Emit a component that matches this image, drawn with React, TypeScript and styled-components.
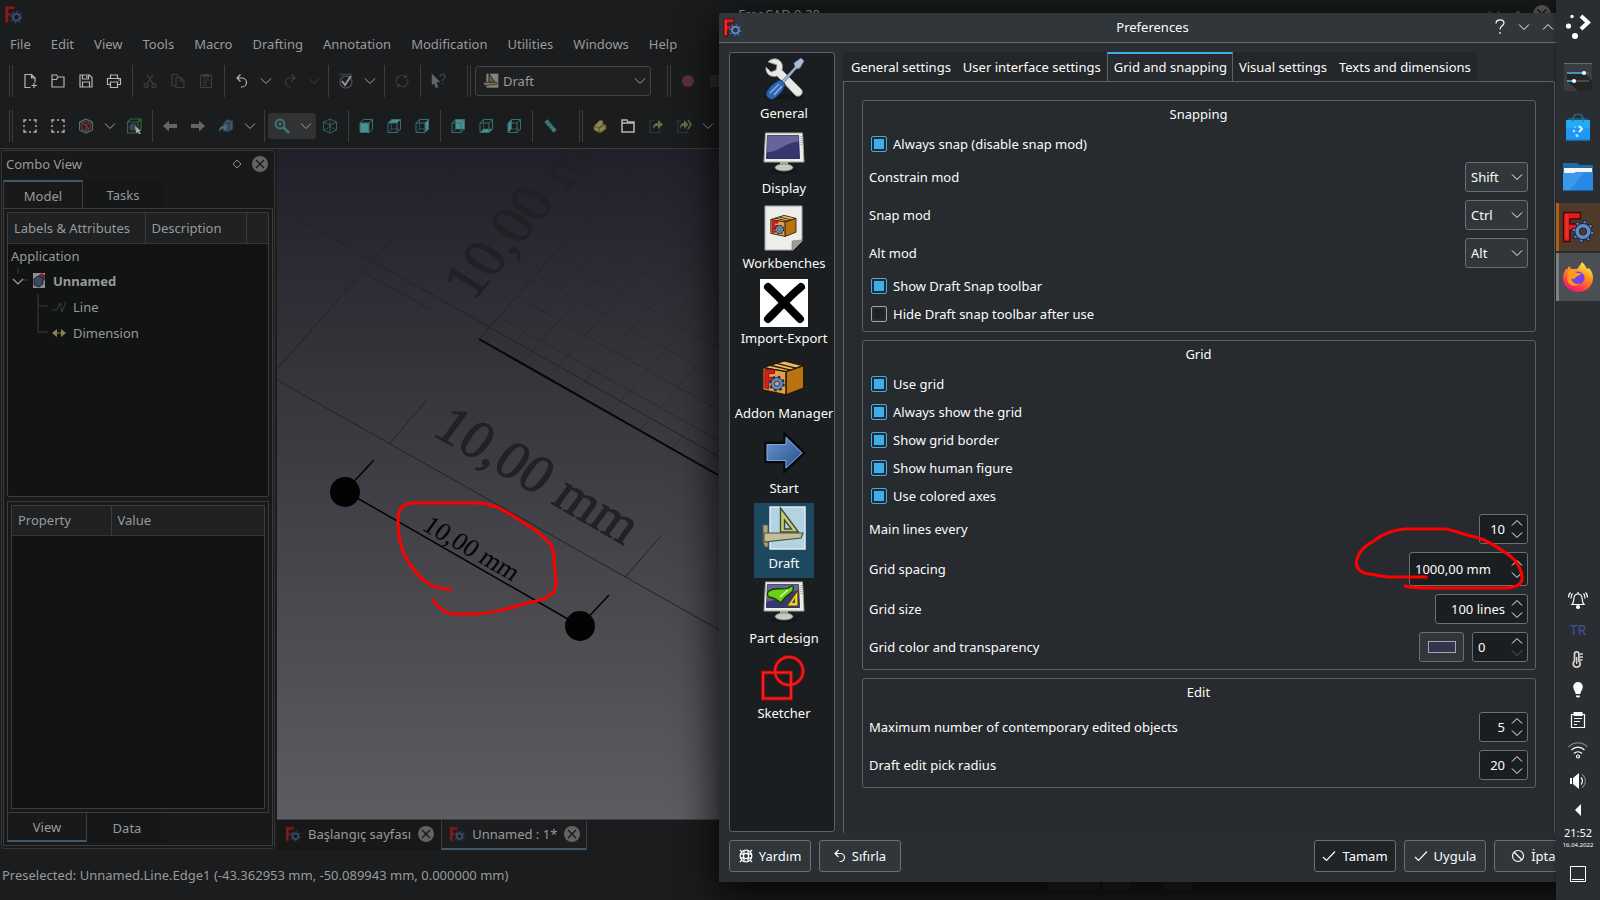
import React from "react";
import styled, { createGlobalStyle } from "styled-components";

const GlobalStyle = createGlobalStyle`
  *, *::before, *::after { box-sizing: border-box; }
  html, body { margin: 0; background: #1a1b1c; }
  body, button, input, select, table {
    font-family: "Noto Sans", "Liberation Sans", sans-serif;
    font-size: 13px;
    line-height: 18px;
  }
  button { margin: 0; padding: 0; border: 0; background: none; color: inherit; cursor: pointer; }
  svg { display: block; flex: none; }
`;

const Desktop = styled.div`
  display: flex;
  height: 100vh;
  overflow: hidden;
  background: #1a1b1c;
`;

const Workspace = styled.div`
  position: relative;
  flex: 1;
  min-width: 0;
  overflow: hidden;
`;

/* ---------- icons ---------- */

const Logo = ({ size = 20, dim = false }: { size?: number; dim?: boolean }) => (
  <svg width={size} height={size} viewBox="0 0 32 32" opacity={dim ? 0.45 : 1} aria-hidden="true">
    <path d="M1.500 1.500h17v6.500h-10.500v5h8v6h-8v11.500h-6.500z" fill="#e01b1b" stroke="#4a0606" strokeWidth="1.400" />
    <path d="M3.200 3.200h3v25h-3z" fill="#ff4a3c" opacity=".45" />
    <g transform="translate(21 20.500)">
      {[0, 45, 90, 135, 180, 225, 270, 315].map((a) => (
        <path key={a} d="M-2.300 -6.500L-1.200 -11h2.400L2.300 -6.500z" transform={`rotate(${a + 10})`} fill="#5f8cc8" stroke="#16263f" strokeWidth="1" />
      ))}
      <circle r="5.800" fill="none" stroke="#16263f" strokeWidth="5.200" />
      <circle r="5.800" fill="none" stroke="#5f8cc8" strokeWidth="3.600" />
    </g>
  </svg>
);

const Chevron = ({ up = false, color = "#fcfcfc", width = 12 }: { up?: boolean; color?: string; width?: number }) => (
  <svg width={width} height={Math.round(width / 2) + 2} viewBox="0 0 12 8" fill="none" stroke={color} strokeWidth="1" aria-hidden="true">
    <path d={up ? "M1 6.500L6 1.500L11 6.500" : "M1 1.500L6 6.500L11 1.500"} />
  </svg>
);

const CloseGlyph = ({ size = 16 }: { size?: number }) => (
  <svg width={size} height={size} viewBox="0 0 16 16" aria-hidden="true">
    <circle cx="8" cy="8" r="8" fill="#636363" />
    <path d="M4 4l8 8M12 4l-8 8" stroke="#151515" strokeWidth="1.200" />
  </svg>
);

const Line16 = ({ color = "#b4b5b6", children }: { color?: string; children: React.ReactNode }) => (
  <svg width="16" height="16" viewBox="0 0 16 16" fill="none" stroke={color} strokeWidth="1.200" aria-hidden="true">{children}</svg>
);

const faces: Record<string, string> = {
  front: "M2 5h9v9.500h-9z",
  top: "M2 5l3.500 -3.500h9l-3.500 3.500z",
  right: "M11 5l3.500 -3.500v9.500l-3.500 3.500z",
  rear: "M5.500 1.500h9v9.500h-9z",
  bottom: "M2 14.500l3.500 -3.500h9l-3.500 3.500z",
  left: "M2 5l3.500 -3.500v9.500l-3.500 3.500z",
};
const Cube = ({ face }: { face: string }) => (
  <svg width="16" height="16" viewBox="0 0 16 16" fill="none" stroke="#356f70" strokeWidth="1" aria-hidden="true">
    <path d={faces[face]} fill="#4c8f90" stroke="none" />
    <path d="M2 5h9v9.500h-9zM2 5l3.500 -3.500h9v9.500l-3.500 3.500M11 5l3.500 -3.500" />
    {face !== "front" && <path d="M5.500 1.500v9.500h9M5.500 11l-3.500 3.500" strokeDasharray="2 1" />}
  </svg>
);

const IsoCube = ({ children }: { children?: React.ReactNode }) => (
  <svg width="16" height="16" viewBox="0 0 16 16" fill="none" stroke="#2c6663" strokeWidth="1" aria-hidden="true">
    <path d="M8 1l6.500 3v8l-6.500 3l-6.500 -3v-8zM1.500 4l6.500 3l6.500 -3M8 7v8" />
    {children ?? <path d="M8 1v8M1.500 12l6.500 -3l6.500 3" strokeDasharray="2 1" />}
  </svg>
);

const ic = {
  newDoc: <Line16><path d="M8.500 14.500h-5.500v-13h6.500l3.500 3.500v4.500M9.500 1.500v3.500h3.500M12 10v5M9.500 12.500h5.500" /></Line16>,
  open: <Line16><path d="M2 14v-12h4.500l1.500 2h6v10zM2 6.500h4.500l1.500 -2.500" /></Line16>,
  save: <Line16><path d="M2 2h9.500l2.500 2.500v9.500h-12zM4.500 2v4h6v-4M4.500 14v-5h7v5M8.800 3v2" /></Line16>,
  print: <Line16><path d="M4.500 5.500v-3.500h7v3.500M4 11.500h-2.500v-6h13v6h-2.500M4.500 9h7v5.500h-7zM12 7h1.500" /></Line16>,
  cut: <Line16 color="#3d3e3f"><circle cx="4" cy="12.500" r="2" /><circle cx="12" cy="12.500" r="2" /><path d="M5 11l6 -9.500M11 11l-6 -9.500" /></Line16>,
  copy: <Line16 color="#3d3e3f"><path d="M5 12.500h-3v-11h5l2 2M6 4.500h5l3 3v7h-8zM10.500 4.500v3.500h3.500" /></Line16>,
  paste: <Line16 color="#3d3e3f"><path d="M2.500 2.500h11v12h-11zM5.500 1.500h5v2.500h-5zM5 7h6M5 9.500h4M5 12h3" /></Line16>,
  undo: <Line16><path d="M6.500 1.500l-3.500 3.500l3.500 3.500M3 5h5a4.500 4.500 0 0 1 0 9h-1" /></Line16>,
  redo: <Line16 color="#3d3e3f"><path d="M9.500 1.500l3.500 3.500l-3.500 3.500M13 5h-5a4.500 4.500 0 0 0 0 9h1" /></Line16>,
  check: <Line16 color="#4f5154"><circle cx="8" cy="9" r="6" /><path d="M1 1.500h13" stroke="#2c3a4b" strokeWidth="2" /><path d="M4 8l3 4l6 -9" stroke="#929394" strokeWidth="2" /></Line16>,
  refresh: <Line16 color="#3a3b3c"><path d="M2.500 10a5.700 5.700 0 0 1 8 -7l2 1.500M13.500 6a5.700 5.700 0 0 1 -8 7l-2 -1.500M12.500 1.500v3h-3M3.500 14.500v-3h3" /></Line16>,
  what: <Line16><path d="M2 1l8 8h-4l2 5l-2 1l-2 -5l-2 2z" fill="#666768" stroke="#555" strokeWidth=".6" /><path d="M10 4c0 -4 5 -3.500 5 -.5c0 2 -2.500 2 -2.500 4.500M12.500 10v1.500" stroke="#334050" strokeWidth="1.500" /></Line16>,
  select: <Line16><path d="M4.500 2h-2.500v2.500M7 2h2M11.500 2h2.500v2.500M14 7v2M14 11.500v2.500h-2.500M9 14h-2M4.500 14h-2.500v-2.500M2 9v-2" strokeWidth="1.400" /></Line16>,
  noDraw: <IsoCube><path d="M8 1l6.500 3v8l-6.500 3l-6.500 -3v-8z" stroke="#3a7c79" /><circle cx="8" cy="8" r="4.600" stroke="#742c31" strokeWidth="1.800" /><path d="M5 5l6 6" stroke="#742c31" strokeWidth="1.800" /></IsoCube>,
  boxSel: <Line16 color="#2f6a35"><path d="M1.500 4h10.500v11h-10.500zM1.500 4l3 -3h10.500v10l-3 4M12 4l3 -3" /><circle cx="7" cy="9" r="4" fill="#39465a" stroke="#242f40" /><path d="M9 8l6 5l-2 0l2 3l-2 0l-1 -2l-2 1z" fill="#aaa" stroke="none" /></Line16>,
  back: <svg width="16" height="16" viewBox="0 0 16 16" aria-hidden="true"><path d="M1 8l6 -5.500v3.500h8v4h-8v3.500z" fill="#646566" /></svg>,
  fwd: <svg width="16" height="16" viewBox="0 0 16 16" aria-hidden="true"><path d="M15 8l-6 -5.500v3.500h-8v4h8v3.500z" fill="#646566" /></svg>,
  link: <Line16 color="#222d3d"><path d="M5 5l4 -3.500l6 1v8.500l-4 3l-6 -1z" fill="#465468" strokeWidth=".8" /><path d="M11 5l4 -2.500M11 5v9M5 5h6" strokeWidth=".8" /><path d="M1 14c0 -5 2 -6 5 -6v-2.500l3 4l-3 3.500v-2.500c-2 0 -4 1 -5 3.500z" fill="#3a7479" stroke="none" /></Line16>,
  zoom: <Line16 color="#3f787b"><circle cx="6" cy="6" r="4.500" strokeWidth="1.800" /><path d="M9.500 9.500l5.500 5.500" strokeWidth="2.600" /><path d="M4 6h4M6 4v4" /></Line16>,
  iso: <IsoCube />,
  ruler: <Line16><path d="M2.500 4l3 -2.500l9 10.500l-3 2.500z" fill="#417f80" stroke="#285556" strokeWidth=".8" /><path d="M5 6l2 -1.500M7 8.500l2 -1.500M9 11l2 -1.500" stroke="#24494a" strokeWidth=".8" /></Line16>,
  part: <Line16><path d="M2 8l6 -6l3 1v3l3 1v4l-6 4l-6 -3z" fill="#8d8650" stroke="#4b4729" strokeWidth=".8" /><path d="M2 8l5 2l4 -4M7 10l1 5M7 10l7 -3" stroke="#4b4729" strokeWidth=".8" /></Line16>,
  folder: <Line16><path d="M2 14v-12h5l1 2h6v10zM2 5h12" strokeWidth="1.500" /></Line16>,
  exp: <Line16 color="#27394d"><path d="M6 2.500h-4v12h10v-4" /><path d="M5 11c0 -5 2 -6 5 -6v-3l5 4.500l-5 4.500v-3c-2 0 -3.500 .5 -5 3z" fill="#5c7340" stroke="none" /></Line16>,
  exp2: <Line16 color="#27394d"><path d="M5 2.500h-3v12h9v-4" /><path d="M4 11c0 -5 2 -6 4 -6v-3l4.500 4.500l-4.500 4.500v-3c-2 0 -3 .5 -4 3z" fill="#5c7340" stroke="none" /><path d="M12 2l3 4.500l-3 4.500" stroke="#5c7340" strokeWidth="1.500" /></Line16>,
};

/* ---------- main window ---------- */

const MainWindow = styled.main`
  display: flex;
  flex-direction: column;
  height: 100%;
  background: #1b1c1d;
  color: #989a9b;
`;

const TitleBar = styled.header`
  display: grid;
  grid-template-columns: 100px 1fr 100px;
  align-items: center;
  height: 28px;
  padding: 0 2px 0 4px;
  text-align: center;
`;

const WindowButtons = styled.div`
  display: flex;
  justify-content: flex-end;
  align-items: center;
  button { display: flex; justify-content: center; width: 24px; }
`;

const MenuBar = styled.nav`
  display: flex;
  align-items: center;
  height: 32px;
  button { padding: 0 10px; }
`;

const ToolBar = styled.div<{ $tall?: boolean }>`
  display: flex;
  align-items: center;
  height: ${(p) => (p.$tall ? 46 : 42)}px;
  padding-top: ${(p) => (p.$tall ? 2 : 0)}px;
`;

const Handle = styled.span<{ $first?: boolean }>`
  width: 4px;
  height: 32px;
  margin: 0 3px 0 ${(p) => (p.$first ? 9 : 15)}px;
  border: solid #3b3c3d;
  border-width: 0 1px;
`;

const Separator = styled.span`
  width: 1px;
  height: 32px;
  margin: 0 3px 0 4px;
  background: #3b3c3d;
`;

const ToolButton = styled.button<{ $narrow?: boolean }>`
  display: flex;
  align-items: center;
  justify-content: center;
  width: ${(p) => (p.$narrow ? 20 : 28)}px;
  height: 26px;
`;

const ActiveTool = styled.span`
  display: flex;
  border-radius: 3px;
  background: #303233;
`;

const WorkbenchSelect = styled.label`
  display: flex;
  align-items: center;
  gap: 4px;
  width: 176px;
  height: 30px;
  margin: 0 1px;
  padding: 0 4px 0 7px;
  border: 1px solid #434445;
  border-radius: 3px;
  background: #1f2021;
  select { flex: 1; border: 0; appearance: none; background: none; color: inherit; }
`;

const Body = styled.div`
  display: flex;
  flex: 1;
  min-height: 0;
  border-top: 1px solid #3b3c3d;
`;

const DockPanel = styled.section`
  display: flex;
  flex-direction: column;
  width: 274px;
  margin: 1px 2px 1px 1px;
  padding: 0 1px 2px;
  border: 1px solid #343536;
  border-radius: 3px;
  background: #191919;
`;

const DockTitle = styled.header`
  display: flex;
  align-items: center;
  height: 29px;
  padding: 0 5px 3px 3px;
  gap: 10px;
  h2 { flex: 1; margin: 0; font-size: 13px; font-weight: 400; }
`;

const DockTabs = styled.div<{ $foot?: boolean }>`
  display: flex;
  height: 29px;
  margin-bottom: ${(p) => (p.$foot ? 3 : -1)}px;
  margin-top: ${(p) => (p.$foot ? -4 : 0)}px;
`;

const DockTab = styled.button<{ $active?: boolean; $foot?: boolean }>`
  width: 80px;
  background: ${(p) => (p.$active ? "#191919" : "#151718")};
  border: 1px solid ${(p) => (p.$active ? "#3b3c3d" : "transparent")};
  ${(p) =>
    p.$active &&
    (p.$foot
      ? "border-top: 0; border-bottom: 2px solid #3d5866;"
      : "border-bottom: 0; border-top: 2px solid #3d5866;")}
`;

const DockBody = styled.div`
  display: flex;
  flex: 1;
  flex-direction: column;
  gap: 4px;
  min-height: 0;
  padding: 3px 3px 0;
  border: 1px solid #3b3c3d;
`;

const TreeBox = styled.div`
  flex: 286 1 0;
  border: 1px solid #3b3c3d;
  border-radius: 2px;
  background: #111413;
`;

const PropertyFrame = styled.div`
  flex: 308 1 0;
  display: flex;
  padding: 3px;
  border: 1px solid #3b3c3d;
`;

const PropertyBox = styled.div`
  flex: 1;
  border: 1px solid #3b3c3d;
  background: #111413;
`;

const DataTable = styled.table`
  width: 100%;
  border-collapse: collapse;
  table-layout: fixed;
  th {
    height: 30px;
    padding: 0 6px;
    border-right: 1px solid #3b3c3d;
    border-bottom: 1px solid #343536;
    background: #1f2122;
    font-weight: 400;
    text-align: left;
  }
  th:last-child { border-right: 0; }
  td { height: 25px; padding: 0 3px; }
`;

const TreeCell = styled.div<{ $bold?: boolean }>`
  display: flex;
  align-items: center;
  height: 26px;
  gap: 7px;
  font-weight: ${(p) => (p.$bold ? 700 : 400)};
`;

const Center = styled.div`
  display: flex;
  flex: 1;
  flex-direction: column;
  min-width: 0;
`;

const Viewport = styled.div`
  flex: 1;
  min-height: 0;
  overflow: hidden;
  background: linear-gradient(#20202a, #323138 28%, #5d5c60);
  border-bottom: 1px solid #3f3f41;
`;

const DocTabs = styled.div`
  display: flex;
  height: 30px;
`;

const DocTab = styled.div<{ $active?: boolean }>`
  display: flex;
  align-items: center;
  gap: 7px;
  padding: 0 6px 0 7px;
  background: ${(p) => (p.$active ? "#1c1d1f" : "#181819")};
  border: solid ${(p) => (p.$active ? "#3b3c3d" : "transparent")};
  border-width: 0 1px 2px;
  border-bottom-color: ${(p) => (p.$active ? "#3d5866" : "transparent")};
`;

const StatusBar = styled.footer`
  display: flex;
  align-items: center;
  height: 50px;
  padding: 0 363px 0 2px;
  gap: 3px;
  span { flex: 1; }
`;

const StatusItem = styled.i<{ $w: number; $gap?: number }>`
  width: ${(p) => p.$w}px;
  height: 28px;
  margin-right: ${(p) => p.$gap ?? 0}px;
  border-radius: 3px;
  background: #27282a;
`;

const gridB = [505, 522, 548, 575, 610, 640, 672, 704];
const gridA: [number, number][] = [[500, 318], [517, 297], [535, 275], [553, 255], [572, 233], [588, 215], [603, 198], [618, 183]];

const Scene = () => (
  <svg width="443" height="670" viewBox="277 149 443 670" overflow="visible" fill="none" role="img" aria-label="3D view with dimension">
    <g stroke="#25252c" strokeWidth="1">
      {gridA.map(([x, y], i) => <path key={i} opacity={0.75 - i * 0.08} d={`M${x} ${y}L760 ${y + (760 - x) * 0.56}`} />)}
      {gridB.map((x, i) => {
        const y = 353 + (x - 505) * 0.57;
        return <path key={x} opacity={0.7 - i * 0.05} d={`M${x} ${y}l180 -203`} />;
      })}
    </g>
    <g stroke="#222327" strokeWidth="1">
      <path d="M277 207L760 480M363 272L430 309M277 369L462 160M480 338L633 165" />
      <path d="M277 380L760 653M390 443L426 401M625 577L662 535" />
    </g>
    <path d="M479 339L718 475" stroke="#060606" strokeWidth="2" />
    <path d="M345 491L580 626M345 491L374 460M580 626L609 595" stroke="#030303" strokeWidth="1.500" />
    <circle cx="345" cy="492" r="15" fill="#030303" />
    <circle cx="580" cy="626" r="15" fill="#030303" />
    <g fontFamily="'Liberation Serif', serif">
      <text transform="translate(473 302) rotate(-50) skewX(8)" fontSize="58" fill="#202025" stroke="#202025">10,00 mm</text>
      <text transform="translate(431 434) rotate(30) skewX(-6)" fontSize="55" fill="#222126" stroke="#222126">10,00 mm</text>
      <text transform="translate(421 529) rotate(30) skewX(-6)" fontSize="26" fill="#030303">10,00 mm</text>
    </g>
    <path
      d="M451 589C430 590 420 578 411 566C401 552 398 538 398 522C398 508 402 503 416 503L476 503C490 503 500 508 510 514L535 530L549 542C553 547 554 553 554 560L556 582C556 592 552 595 545 598C538 602 528 602 520 605C505 610 490 613 476 614L456 614C444 614 438 607 433 600"
      stroke="#fe0000" strokeWidth="3" strokeLinecap="round"
    />
  </svg>
);

const menus = ["File", "Edit", "View", "Tools", "Macro", "Drafting", "Annotation", "Modification", "Utilities", "Windows", "Help"];

const Tool = ({ icon, label }: { icon: React.ReactNode; label: string }) => <ToolButton aria-label={label}>{icon}</ToolButton>;
const Drop = ({ off = false }: { off?: boolean }) => (
  <ToolButton $narrow aria-label="More"><Chevron color={off ? "#3d3e3f" : "#a0a1a2"} /></ToolButton>
);

const DraftGlyph = () => (
  <svg width="16" height="16" viewBox="0 0 48 48" opacity=".65" aria-hidden="true">
    <path d="M10 2h36v42h-36z" fill="#b9b9b4" />
    <path d="M18 2v26h18z" fill="#8f8a4a" stroke="#222" strokeWidth="3" />
    <path d="M2 28h40v6l-40 4z" fill="#b59a6a" stroke="#222" strokeWidth="2" />
  </svg>
);

const FreeCadWindow = () => (
  <MainWindow>
    <TitleBar>
      <Logo size={19} dim />
      <span>FreeCAD 0.20</span>
      <WindowButtons>
        <button aria-label="Minimize"><Chevron color="#989a9b" /></button>
        <button aria-label="Maximize"><Chevron up color="#989a9b" /></button>
        <button aria-label="Close"><CloseGlyph size={18} /></button>
      </WindowButtons>
    </TitleBar>
    <MenuBar>{menus.map((m) => <button key={m}>{m}</button>)}</MenuBar>
    <ToolBar>
      <Handle $first />
      <Tool icon={ic.newDoc} label="New" /><Tool icon={ic.open} label="Open" /><Tool icon={ic.save} label="Save" /><Tool icon={ic.print} label="Print" />
      <Separator />
      <Tool icon={ic.cut} label="Cut" /><Tool icon={ic.copy} label="Copy" /><Tool icon={ic.paste} label="Paste" />
      <Separator />
      <Tool icon={ic.undo} label="Undo" /><Drop /><Tool icon={ic.redo} label="Redo" /><Drop off />
      <Separator />
      <Tool icon={ic.check} label="Check" /><Drop />
      <Separator />
      <Tool icon={ic.refresh} label="Refresh" />
      <Separator />
      <Tool icon={ic.what} label="Help" />
      <Handle />
      <WorkbenchSelect>
        <DraftGlyph />
        <select aria-label="Workbench"><option>Draft</option></select>
        <Chevron color="#a0a1a2" />
      </WorkbenchSelect>
      <Handle />
      <Tool label="Record" icon={<svg width="12" height="12" aria-hidden="true"><circle cx="6" cy="6" r="6" fill="#5e3136" /></svg>} />
      <Tool label="Stop" icon={<svg width="12" height="12" aria-hidden="true"><path d="M0 0h12v12h-12z" fill="#2e2e2e" /></svg>} />
    </ToolBar>
    <ToolBar $tall>
      <Handle $first />
      <Tool icon={ic.select} label="Fit all" /><Tool icon={ic.select} label="Fit selection" /><Tool icon={ic.noDraw} label="Draw style" /><Drop /><Tool icon={ic.boxSel} label="Box selection" />
      <Separator />
      <Tool icon={ic.back} label="Back" /><Tool icon={ic.fwd} label="Forward" /><Tool icon={ic.link} label="Go to link" /><Drop />
      <Separator />
      <ActiveTool><Tool icon={ic.zoom} label="Zoom" /><Drop /></ActiveTool>
      <Tool icon={ic.iso} label="Isometric" />
      <Separator />
      <Tool icon={<Cube face="front" />} label="Front" /><Tool icon={<Cube face="top" />} label="Top" /><Tool icon={<Cube face="right" />} label="Right" />
      <Separator />
      <Tool icon={<Cube face="rear" />} label="Rear" /><Tool icon={<Cube face="bottom" />} label="Bottom" /><Tool icon={<Cube face="left" />} label="Left" />
      <Separator />
      <Tool icon={ic.ruler} label="Measure" />
      <Handle />
      <Tool icon={ic.part} label="Part" /><Tool icon={ic.folder} label="Group" /><Tool icon={ic.exp} label="Link" /><Tool icon={ic.exp2} label="Link group" /><Drop />
    </ToolBar>
    <Body>
      <DockPanel>
        <DockTitle>
          <h2>Combo View</h2>
          <svg width="10" height="10" viewBox="0 0 10 10" aria-hidden="true"><path d="M5 1l4 4l-4 4l-4 -4z" fill="none" stroke="#8a8b8c" /></svg>
          <button aria-label="Close panel"><CloseGlyph /></button>
        </DockTitle>
        <DockTabs>
          <DockTab $active>Model</DockTab>
          <DockTab>Tasks</DockTab>
        </DockTabs>
        <DockBody>
          <TreeBox>
            <DataTable>
              <colgroup><col style={{ width: 137 }} /><col style={{ width: 101 }} /><col /></colgroup>
              <thead><tr><th>Labels &amp; Attributes</th><th>Description</th><th /></tr></thead>
              <tbody>
                <tr><td colSpan={3}>Application</td></tr>
                <tr><td colSpan={3}>
                  <TreeCell $bold>
                    <svg width="35" height="26" viewBox="0 0 35 26" fill="none" aria-hidden="true">
                      <path d="M7 0v6M12 12h5" stroke="#3b3c3d" />
                      <path d="M2 11l5 5l5 -5" stroke="#a0a1a2" strokeWidth="1.200" />
                      <path d="M22 5h12v15h-12z" fill="#8f8f90" />
                      <path d="M28 7l3 -2l3 2v5l-3 1l-3 -2z" fill="#742a2c" />
                      <path d="M23 11l4 -3l5 2v6l-4 3l-5 -2z" fill="#394a60" stroke="#1c2431" />
                    </svg>
                    Unnamed
                  </TreeCell>
                </td></tr>
                <tr><td colSpan={3}>
                  <TreeCell>
                    <svg width="55" height="26" viewBox="0 0 55 26" fill="none" aria-hidden="true">
                      <path d="M27 0v26M27 12h10" stroke="#3b3c3d" />
                      <path d="M41 16h5l3 -7l2 9l4 -11" stroke="#353d49" />
                    </svg>
                    Line
                  </TreeCell>
                </td></tr>
                <tr><td colSpan={3}>
                  <TreeCell>
                    <svg width="55" height="26" viewBox="0 0 55 26" fill="none" aria-hidden="true">
                      <path d="M27 0v12h10" stroke="#3b3c3d" />
                      <path d="M41 13l5 -4v8zM55 13l-5 -4v8z" fill="#8a8350" /><path d="M46 13h4" stroke="#8a8350" />
                    </svg>
                    Dimension
                  </TreeCell>
                </td></tr>
              </tbody>
            </DataTable>
          </TreeBox>
          <PropertyFrame>
            <PropertyBox>
              <DataTable>
                <colgroup><col style={{ width: 99 }} /><col /></colgroup>
                <thead><tr><th>Property</th><th>Value</th></tr></thead>
              </DataTable>
            </PropertyBox>
          </PropertyFrame>
          <DockTabs $foot>
            <DockTab $active $foot>View</DockTab>
            <DockTab $foot>Data</DockTab>
          </DockTabs>
        </DockBody>
      </DockPanel>
      <Center>
        <Viewport><Scene /></Viewport>
        <DocTabs>
          <DocTab><Logo size={16} dim />Başlangıç sayfası<button aria-label="Close tab"><CloseGlyph /></button></DocTab>
          <DocTab $active><Logo size={16} dim />Unnamed : 1*<button aria-label="Close tab"><CloseGlyph /></button></DocTab>
        </DocTabs>
      </Center>
    </Body>
    <StatusBar>
      <span>Preselected: Unnamed.Line.Edge1 (-43.362953 mm, -50.089943 mm, 0.000000 mm)</span>
      <StatusItem $w={53} /><StatusItem $w={28} $gap={30} /><StatusItem $w={29} />
    </StatusBar>
  </MainWindow>
);

/* ---------- preferences dialog ---------- */

const Dialog = styled.section`
  position: absolute;
  top: 13px;
  bottom: 18px;
  left: 719px;
  width: 866px;
  display: flex;
  flex-direction: column;
  border-radius: 3px 3px 0 0;
  background: #2a2e32;
  color: #fcfcfc;
  box-shadow: 0 10px 40px 4px rgba(0, 0, 0, 0.8);
`;

const DialogTitle = styled.header`
  display: grid;
  grid-template-columns: 100px 1fr 100px;
  align-items: center;
  height: 30px;
  padding: 0 1px 1px 4px;
  border-bottom: 1px solid #686c70;
  border-radius: 3px 3px 0 0;
  background: #31363b;
  h1 { margin: 0; padding-right: 2px; font-size: 13px; font-weight: 400; text-align: center; }
`;

const DialogBody = styled.div`
  display: flex;
  flex: 1;
  gap: 8px;
  min-height: 0;
  padding: 9px 30px 0 10px;
`;

const PageList = styled.nav`
  display: flex;
  flex-direction: column;
  align-items: center;
  width: 106px;
  margin-bottom: 1px;
  padding-left: 4px;
  border: 1px solid #5f6264;
  border-radius: 3px;
  background: #1b1e20;
`;

const PageItem = styled.button<{ $active?: boolean }>`
  display: flex;
  flex-direction: column;
  align-items: center;
  gap: 2px;
  height: 75px;
  padding: 1px ${(p) => (p.$active ? 6 : 0)}px 6px;
  background: ${(p) => (p.$active ? "#1e485f" : "none")};
  white-space: nowrap;
`;

const PageStack = styled.div`
  display: flex;
  flex: 1;
  flex-direction: column;
`;

const Tabs = styled.div`
  display: flex;
  height: 30px;
  margin-bottom: -1px;
`;

const Tab = styled.button<{ $active?: boolean }>`
  padding: 0 5px ${(p) => (p.$active ? 2 : 0)}px 6px;
  margin-bottom: ${(p) => (p.$active ? 0 : 1)}px;
  border: 1px solid ${(p) => (p.$active ? "#5f6264" : "#25282b")};
  border-width: ${(p) => (p.$active ? "2px 1px 0" : "1px 1px 0 0")};
  border-top-color: ${(p) => (p.$active ? "#3daee9" : "#25282b")};
  background: ${(p) => (p.$active ? "#272a2e" : "#24272a")};
  &:first-child { padding-left: 8px; }
`;

const Page = styled.form`
  display: flex;
  flex: 1;
  flex-direction: column;
  gap: 8px;
  padding: 18px 18px 0 18px;
  border: 1px solid #5f6264;
  border-bottom: 0;
  border-radius: 0 3px 0 0;
  background: #272a2e;
`;

const Group = styled.fieldset`
  display: flex;
  flex-direction: column;
  gap: 8px;
  min-width: 0;
  margin: 0;
  padding: 3px 7px 7px 6px;
  border: 1px solid #5f6264;
  border-radius: 3px;
  h3 { margin: 0 0 2px; font-size: 13px; font-weight: 400; line-height: 20px; text-align: center; }
`;

const CheckRow = styled.label`
  display: flex;
  align-items: center;
  gap: 6px;
  height: 20px;
  padding-left: 2px;
  input {
    appearance: none;
    width: 16px;
    height: 16px;
    margin: 0;
    padding: 2px;
    border: 1px solid #a0a2a4;
    border-radius: 2px;
    background: #1f2225;
    background-clip: content-box;
  }
  input:checked { border-color: #3daee9; background-color: #3daee9; }
`;

const FieldRow = styled.div`
  position: relative;
  display: flex;
  align-items: center;
  gap: 8px;
  label { flex: 1; }
`;

const Combo = styled.span`
  display: flex;
  align-items: center;
  width: 63px;
  height: 30px;
  padding-right: 4px;
  border: 1px solid #6b6f72;
  border-radius: 3px;
  background: #31363a;
  select {
    flex: 1;
    min-width: 0;
    padding: 0 0 0 5px;
    border: 0;
    appearance: none;
    background: none;
    color: inherit;
  }
`;

const Spin = styled.span<{ $w: number; $tall?: boolean }>`
  display: flex;
  align-items: center;
  width: ${(p) => p.$w}px;
  height: ${(p) => (p.$tall ? 34 : 30)}px;
  padding-right: 4px;
  border: 1px solid #6b6f72;
  border-radius: 3px;
  background: #1b1e20;
  input {
    flex: 1;
    min-width: 0;
    padding: 0 6px 0 5px;
    border: 0;
    background: none;
    color: inherit;
  }
`;

const SpinArrows = styled.span`
  display: flex;
  flex-direction: column;
  gap: 4px;
`;

const ColorButton = styled.button`
  display: flex;
  align-items: center;
  justify-content: center;
  width: 45px;
  height: 30px;
  border: 1px solid #6b6f72;
  border-radius: 3px;
  background: #31363a;
  span { width: 28px; height: 12px; border: 1px solid #a8a9ac; background: #34324e; }
`;

const Markup = styled.svg`
  position: absolute;
  top: -26px;
  right: 0;
  pointer-events: none;
`;

const DialogButtons = styled.footer`
  display: flex;
  gap: 8px;
  padding: 7px 9px 10px 10px;
`;

const PushButton = styled.button<{ $default?: boolean; $push?: boolean }>`
  display: flex;
  align-items: center;
  justify-content: center;
  gap: 6px;
  width: 82px;
  height: 32px;
  margin-left: ${(p) => (p.$push ? "auto" : "0")};
  border: 1px solid #6b6f72;
  border-radius: 3px;
  background: ${(p) => (p.$default ? "#212427" : "#31363a")};
`;

const Pic = ({ children, defs }: { children: React.ReactNode; defs?: React.ReactNode }) => (
  <svg width="48" height="48" viewBox="0 0 48 48" aria-hidden="true">{defs}{children}</svg>
);

const BoxArt = () => (
  <g>
    <path d="M3 11l22 -7l20 5l-18 6z" fill="#eab86a" stroke="#2a1a04" strokeWidth="1.400" strokeLinejoin="round" />
    <path d="M3 11l24 4v24l-24 -5z" fill="#e0a04c" stroke="#2a1a04" strokeWidth="1.400" strokeLinejoin="round" />
    <path d="M27 15l18 -6v23l-18 7z" fill="#b87410" stroke="#2a1a04" strokeWidth="1.400" strokeLinejoin="round" />
    <path d="M10 8.500l22 5M17 6.500l20 5" stroke="#2a1a04" strokeWidth="1.400" />
    <path d="M5 13h10v4h-6v4h5v4h-5v8l-4 -1z" fill="#e01b1b" stroke="#6a0a0a" strokeWidth=".8" />
    <circle cx="17.500" cy="27.500" r="6.600" fill="none" stroke="#1a2c4c" strokeWidth="3" strokeDasharray="2.600 2.580" />
    <circle cx="17.500" cy="27.500" r="4.400" fill="none" stroke="#1a2c4c" strokeWidth="4.400" />
    <circle cx="17.500" cy="27.500" r="4.400" fill="none" stroke="#5f8cc8" strokeWidth="3" />
  </g>
);

const Monitor = () => (
  <g>
    <ellipse cx="24" cy="41" rx="14" ry="3" fill="#15181a" />
    <path d="M20 32h8v5h-8z" fill="#b5b5b0" />
    <ellipse cx="24" cy="37.500" rx="9" ry="3.500" fill="#c9c9c4" stroke="#77776f" strokeWidth=".8" />
    <path d="M5.500 3h37l1.500 29h-40z" fill="#ecece8" stroke="#a5a59e" strokeWidth="1" strokeLinejoin="round" />
    <path d="M7.500 5.500h31l1 23h-33z" fill="#37376f" stroke="#1a1a4e" strokeWidth=".8" />
    <path d="M7.500 5.500h31l.2 6c-14 1 -18 10 -32 11z" fill="#8d8db8" opacity=".55" />
    <path d="M41 6v9" stroke="#8b8b85" strokeDasharray="1 1" />
  </g>
);

const pages: { name: string; art: React.ReactNode }[] = [
  { name: "General", art: (
    <Pic>
      <ellipse cx="24" cy="43" rx="20" ry="2.500" fill="#131617" />
      <g transform="translate(0 2)">
        <path d="M8 6c4 -5 12 -4 14 2c1 3 0 5 0 6l19 19c4 4 -2 10 -6 6l-18 -19c-6 2 -12 -2 -11 -9l5 5l5 -2l1 -5z" fill="#e8e8e6" stroke="#8d8d8a" strokeWidth=".9" />
        <path d="M20 27l15 -16l-1 -4l7 -5l3 3l-4 7l-4 1l-14 16z" fill="#a9bdd6" stroke="#5d7592" strokeWidth=".9" />
        <path d="M21 24l4 4c-1 5 -7 13 -12 15c-4 1 -8 -3 -6 -7c2 -5 9 -11 14 -12z" fill="#2f66b0" stroke="#1a3f78" strokeWidth=".9" />
        <path d="M19 28l-9 9M22 30l-8 9" stroke="#8db4e6" strokeWidth="1.300" />
      </g>
    </Pic>) },
  { name: "Display", art: <Pic><g transform="translate(0 1)"><Monitor /></g></Pic> },
  { name: "Workbenches", art: (
    <Pic>
      <path d="M5 2h37v35l-9 9h-28z" fill="#ededeb" stroke="#a6a6a3" strokeWidth="1" />
      <path d="M42 36l-10 1v9z" fill="#9c9c99" stroke="#777" strokeWidth=".6" />
      <g transform="translate(9 9) scale(.6)"><BoxArt /></g>
    </Pic>) },
  { name: "Import-Export", art: (
    <Pic>
      <path d="M0 0h48v48h-48z" fill="#fff" />
      <path d="M8 8c9 8 22 22 32 32M41 8c-11 9 -22 21 -33 32" fill="none" stroke="#000" strokeWidth="8" strokeLinecap="round" />
    </Pic>) },
  { name: "Addon Manager", art: <Pic><g transform="translate(0 3) scale(.97)"><BoxArt /></g></Pic> },
  { name: "Start", art: (
    <Pic defs={<defs><linearGradient id="arrow" x1="0" y1="0" x2="1" y2="1"><stop offset="0" stopColor="#6f9ad0" /><stop offset="1" stopColor="#204a87" /></linearGradient></defs>}>
      <path d="M5.500 14h19v-9.500l20 19.500l-20 18.500v-9.500h-19z" fill="url(#arrow)" stroke="#05080d" strokeWidth="2.400" />
      <path d="M7 15.500h19v-7l16 15.500l-16 15v-7.500h-19z" fill="none" stroke="#7ba5db" strokeWidth="1" />
    </Pic>) },
  { name: "Draft", art: (
    <Pic>
      <path d="M10 3h35v42h-35z" fill="#b4d3e2" stroke="#dcedf5" strokeWidth="1.500" />
      <path d="M20.500 4v24h18z" fill="#c8cd6c" stroke="#3c4a3c" strokeWidth="1.400" />
      <path d="M24.500 16v9h7z" fill="#b4d3e2" stroke="#3c4a3c" strokeWidth="1.400" />
      <path d="M3 21h5v22h-3l-2 -5z" fill="#aaa583" stroke="#5e5c48" strokeWidth="1" />
      <path d="M4 29h39l-2 5l-37 4z" fill="#c3bd98" stroke="#4f4e3e" strokeWidth="1.200" />
    </Pic>) },
  { name: "Part design", art: (
    <Pic>
      <Monitor />
      <path d="M9 12c8 -5 12 0 19 -3c2 -1 4 -3 5 -2c3 7 -8 8 -12 17c-4 -3 -5 -5 -12 -6c-2 -1 -2 -5 0 -6z" fill="#6cd017" stroke="#173a04" strokeWidth="1.300" />
      <path d="M20 18l8 -7" stroke="#dff5c8" strokeWidth="1.200" />
      <path d="M38 11v16h-11z" fill="#f0d030" stroke="#5c4a06" strokeWidth="1.200" /><path d="M35 19v5h-3z" fill="#37376f" />
    </Pic>) },
  { name: "Sketcher", art: (
    <Pic>
      <g fill="none" stroke="#a00808" strokeWidth="4"><path d="M3 18.500h28v26h-28z" /><circle cx="29" cy="17" r="14" /></g>
      <g fill="none" stroke="#f02020" strokeWidth="2"><path d="M3 18.500h28v26h-28z" /><circle cx="29" cy="17" r="14" /></g>
    </Pic>) },
];

const Check = ({ text, on = true }: { text: string; on?: boolean }) => (
  <CheckRow><input type="checkbox" defaultChecked={on} />{text}</CheckRow>
);

const ComboField = ({ id, text, value }: { id: string; text: string; value: string }) => (
  <FieldRow>
    <label htmlFor={id}>{text}</label>
    <Combo><select id={id}><option>{value}</option></select><Chevron /></Combo>
  </FieldRow>
);

interface SpinProps { id: string; text: string; value: string; width: number; left?: boolean; tall?: boolean; extra?: React.ReactNode; after?: React.ReactNode; atMin?: boolean }
const ValueInput = styled.input<{ $left?: boolean }>`text-align: ${(p) => (p.$left ? "left" : "right")};`;
const SpinField = ({ id, text, value, width, left, tall, extra, after, atMin }: SpinProps) => (
  <FieldRow>
    <label htmlFor={id}>{text}</label>
    {extra}
    <Spin $w={width} $tall={tall}>
      <ValueInput id={id} defaultValue={value} $left={left} />
      <SpinArrows>
        <button type="button" aria-label="Increase"><Chevron up /></button>
        <button type="button" aria-label="Decrease"><Chevron color={atMin ? "#5f6264" : "#fcfcfc"} /></button>
      </SpinArrows>
    </Spin>
    {after}
  </FieldRow>
);

const Tick = () => (
  <svg width="14" height="12" viewBox="0 0 14 12" aria-hidden="true"><path d="M1 7l3.500 3.500L13 1.500" fill="none" stroke="#fcfcfc" strokeWidth="1.200" /></svg>
);

const Preferences = () => (
  <Dialog role="dialog" aria-label="Preferences">
    <DialogTitle>
      <Logo size={19} />
      <h1>Preferences</h1>
      <WindowButtons>
        <button aria-label="Help">
          <svg width="12" height="16" viewBox="0 0 12 16" fill="none" stroke="#fcfcfc" strokeWidth="1.200" aria-hidden="true"><path d="M2 4.500c0 -5 8 -4.500 8 -.5c0 3 -4 2.500 -4 6.500M6 13v2" /></svg>
        </button>
        <button aria-label="Minimize"><Chevron /></button>
        <button aria-label="Maximize"><Chevron up /></button>
        <button aria-label="Close"><CloseGlyph /></button>
      </WindowButtons>
    </DialogTitle>
    <DialogBody>
      <PageList>
        {pages.map((p) => <PageItem key={p.name} $active={p.name === "Draft"}>{p.art}{p.name}</PageItem>)}
      </PageList>
      <PageStack>
        <Tabs>
          <Tab>General settings</Tab>
          <Tab>User interface settings</Tab>
          <Tab $active>Grid and snapping</Tab>
          <Tab>Visual settings</Tab>
          <Tab>Texts and dimensions</Tab>
        </Tabs>
        <Page>
          <Group>
            <h3>Snapping</h3>
            <Check text="Always snap (disable snap mod)" />
            <ComboField id="constrain" text="Constrain mod" value="Shift" />
            <ComboField id="snap" text="Snap mod" value="Ctrl" />
            <ComboField id="alt" text="Alt mod" value="Alt" />
            <Check text="Show Draft Snap toolbar" />
            <Check text="Hide Draft snap toolbar after use" on={false} />
          </Group>
          <Group>
            <h3>Grid</h3>
            <Check text="Use grid" />
            <Check text="Always show the grid" />
            <Check text="Show grid border" />
            <Check text="Show human figure" />
            <Check text="Use colored axes" />
            <SpinField id="main-lines" text="Main lines every" value="10" width={49} />
            <SpinField
              id="spacing" text="Grid spacing" value="1000,00 mm" width={119} left tall
              after={
                <Markup width="174" height="64" viewBox="1354 526 174 64" fill="none" stroke="#fe0000" strokeWidth="3" strokeLinecap="round">
                  <path d="M1426 577L1388 577C1380 576 1375 575 1370 574C1362 574 1354 568 1357 559C1360 548 1368 545 1375 540C1384 533 1395 530 1404 529L1446 529C1456 531 1465 535 1475 537C1488 540 1500 549 1510 556C1519 563 1523 573 1522 580C1520 586 1512 588 1504 588L1430 588C1422 588 1412 588 1405 586" />
                </Markup>
              }
            />
            <SpinField id="size" text="Grid size" value="100 lines" width={93} />
            <SpinField id="transparency" text="Grid color and transparency" value="0" width={56} left atMin extra={<ColorButton type="button" aria-label="Grid color"><span /></ColorButton>} />
          </Group>
          <Group>
            <h3>Edit</h3>
            <SpinField id="max-edited" text="Maximum number of contemporary edited objects" value="5" width={49} />
            <SpinField id="radius" text="Draft edit pick radius" value="20" width={49} />
          </Group>
        </Page>
      </PageStack>
    </DialogBody>
    <DialogButtons>
      <PushButton>
        <svg width="14" height="14" viewBox="0 0 14 14" fill="none" stroke="#fcfcfc" strokeWidth="1.300" aria-hidden="true"><circle cx="7" cy="7" r="5.800" /><circle cx="7" cy="7" r="2.600" /><path d="M5 1v4M9 1v4M5 9v4M9 9v4M1 5h4M1 9h4M9 5h4M9 9h4M1 1l2 2M13 1l-2 2M1 13l2 -2M13 13l-2 -2" /></svg>
        Yardım
      </PushButton>
      <PushButton>
        <svg width="12" height="14" viewBox="0 0 12 14" fill="none" stroke="#fcfcfc" strokeWidth="1.200" aria-hidden="true"><path d="M4.500 1l-3.500 3.500l3.500 3.500M1 4.500h5.500a4 4 0 0 1 0 8h-1" /></svg>
        Sıfırla
      </PushButton>
      <PushButton $default $push><Tick />Tamam</PushButton>
      <PushButton><Tick />Uygula</PushButton>
      <PushButton>
        <svg width="14" height="14" viewBox="0 0 14 14" fill="none" stroke="#fcfcfc" strokeWidth="1.200" aria-hidden="true"><circle cx="7" cy="7" r="5.500" /><path d="M3 3l8 8" /></svg>
        İptal
      </PushButton>
    </DialogButtons>
  </Dialog>
);

/* ---------- side panel ---------- */

const SidePanel = styled.aside`
  position: relative;
  display: flex;
  flex-direction: column;
  justify-content: space-between;
  width: 44px;
  padding: 3px 0 11px;
  background: #2a2e32;
  color: #fcfcfc;
  box-shadow: 0 0 6px rgba(0, 0, 0, 0.35);
`;

const Launchers = styled.div`
  display: flex;
  flex-direction: column;
  gap: 2px;
`;

const Launcher = styled.button<{ $mark?: string; $tint?: string }>`
  display: flex;
  align-items: center;
  justify-content: center;
  height: 48px;
  padding-right: ${(p) => (p.$mark ? 3 : 0)}px;
  border-left: ${(p) => (p.$mark ? `3px solid ${p.$mark}` : "0")};
  background: ${(p) => p.$tint ?? "none"};
`;

const Tray = styled.div`
  display: flex;
  flex-direction: column;
  align-items: center;
`;

const TrayButton = styled.button<{ $text?: boolean }>`
  display: flex;
  align-items: center;
  justify-content: center;
  height: 30px;
  ${(p) => p.$text && "color: #3e4d94; font-size: 14px; font-weight: 500;"}
`;

const Clock = styled.time`
  display: flex;
  flex-direction: column;
  align-items: center;
  margin-bottom: 10px;
  font-size: 11px;
  line-height: 16px;
  small { font-size: 6px; line-height: 8px; }
`;

const Tray20 = ({ children }: { children: React.ReactNode }) => (
  <svg width="20" height="20" viewBox="0 0 20 20" fill="none" stroke="#fcfcfc" strokeWidth="1.200" aria-hidden="true">{children}</svg>
);

const SideBar = () => (
  <SidePanel>
    <Launchers>
      <Launcher aria-label="Applications">
        <svg width="26" height="26" viewBox="0 0 26 26" aria-hidden="true"><path d="M16 2l7 6.500l-7 6.500" fill="none" stroke="#fff" strokeWidth="4" /><circle cx="7" cy="2.500" r="1.700" fill="#fff" /><circle cx="3.500" cy="12" r="2.600" fill="#fff" /><circle cx="10" cy="22" r="3" fill="#fff" /></svg>
      </Launcher>
      <Launcher aria-label="Settings">
        <svg width="28" height="28" viewBox="0 0 28 28" aria-hidden="true"><path d="M0 0h28v28h-28z" fill="#3b3e41" /><path d="M3 10h17l8 8v10h-14l-11 -10z" fill="#232527" /><path d="M0 .5h28" stroke="#686b6e" /><path d="M3 10h22M3 18h22" stroke="#55585b" strokeWidth="1.500" /><path d="M3 10h17M3 18h7" stroke="#3daee9" strokeWidth="1.500" /><circle cx="20" cy="10" r="2.100" fill="#fff" /><circle cx="10" cy="18" r="2.100" fill="#fff" /></svg>
      </Launcher>
      <Launcher aria-label="Discover">
        <svg width="26" height="28" viewBox="0 0 26 28" aria-hidden="true"><path d="M1 7h24v21h-24z" fill="#1d99f3" /><path d="M1 7h24v8h-24z" fill="#21adf6" /><path d="M1 26.500h24v1.500h-24z" fill="#1668b8" /><path d="M2 7h22l-2 -2h-18z" fill="#1b5a78" /><path d="M8 9v-3a5 5 0 0 1 10 0v3" fill="none" stroke="#2a7896" strokeWidth="1.200" /><path d="M14 13l3 3l-3 3" fill="none" stroke="#e6f4ff" strokeWidth="2" /><circle cx="9" cy="18" r="1.200" fill="#bfe2ff" /><circle cx="12" cy="22.500" r="1.500" fill="#bfe2ff" /><circle cx="10" cy="14" r=".8" fill="#bfe2ff" /></svg>
      </Launcher>
      <Launcher aria-label="Files">
        <svg width="30" height="28" viewBox="0 0 30 28" aria-hidden="true"><path d="M0 0h14l2 2h14v10h-30z" fill="#1f6ba5" /><path d="M1 5h28v8h-28z" fill="#f4f4f4" /><path d="M0 10h11l2 -1h17v19h-30z" fill="#3b98ea" /><path d="M6 28h24v-18l-8 -1z" fill="#1f7fe0" opacity=".65" /><path d="M0 27h30v1h-30z" fill="#1763b0" /></svg>
      </Launcher>
      <Launcher aria-label="FreeCAD" $mark="#b35f12" $tint="#4d3a2b"><Logo size={32} /></Launcher>
      <Launcher aria-label="Firefox" $mark="#7d8083" $tint="#4b4e52">
        <svg width="32" height="32" viewBox="0 0 32 32" aria-hidden="true">
          <defs><linearGradient id="fox" x1=".8" y1="0" x2=".3" y2="1"><stop offset="0" stopColor="#fff44f" /><stop offset=".45" stopColor="#ff8a1e" /><stop offset=".8" stopColor="#ff3648" /><stop offset="1" stopColor="#e31587" /></linearGradient></defs>
          <path d="M20 1c3 3 4 5 5 7l2 -1c3 3 4.500 7 4 11c-1 8 -7 13 -15 13c-9 0 -15 -7 -15 -14c0 -4 1 -7 4 -10l0 2l2 -4c1 2 2 3 3 3h5c2 -2 3 -4 5 -7z" fill="url(#fox)" />
          <circle cx="16" cy="17" r="6.500" fill="#7542e5" />
          <path d="M6 10c4 -2 7 0 9 2h4c-1 3 -4 3 -5 4c-2 3 -4 2 -5 1c1 6 6 7 9 5c-4 5 -13 3 -13 -5z" fill="#ff9a1e" />
        </svg>
      </Launcher>
    </Launchers>
    <Tray>
      <TrayButton aria-label="Notifications"><Tray20><path d="M4 14.500c2 -2 1.500 -4 2 -7c.5 -2.500 2 -3.500 4 -3.500s3.500 1 4 3.500c.5 3 0 5 2 7z" /><path d="M10 2v2" /><circle cx="10" cy="17" r="1.500" fill="#fcfcfc" /><path d="M4.500 3.500c-1.500 1.500 -1.500 3 -1.500 5M2.500 2.500c-1.500 1.500 -2 3 -2 5M15.500 3.500c1.500 1.500 1.500 3 1.500 5M17.500 2.500c1.500 1.500 2 3 2 5" /></Tray20></TrayButton>
      <TrayButton $text>TR</TrayButton>
      <TrayButton aria-label="Temperature"><Tray20><path d="M6.500 11v-7a2.200 2.200 0 0 1 4.400 0v7a3.500 3.500 0 1 1 -4.400 0z" stroke="#d5d0c8" strokeWidth="1.800" /><path d="M8.700 7v7M12 4h3M12 7h3M12 10h2.500" stroke="#d5d0c8" strokeWidth="1.400" /></Tray20></TrayButton>
      <TrayButton aria-label="Brightness"><Tray20><path d="M10 2a4.800 4.800 0 0 1 4.800 5c0 2.500 -2 4 -2.500 7h-4.600c-.5 -3 -2.500 -4.500 -2.500 -7a4.800 4.800 0 0 1 4.800 -5zM8 15.500h4v1l-1 1h-2l-1 -1z" fill="#fcfcfc" stroke="none" /></Tray20></TrayButton>
      <TrayButton aria-label="Clipboard"><Tray20><path d="M3.500 4.500h13v13h-13z" /><path d="M5.500 2h9v4h-9z" fill="#fcfcfc" stroke="none" /><path d="M6 8.500h8M6 11.500h6M6 14.500h3" /></Tray20></TrayButton>
      <TrayButton aria-label="Network"><Tray20><circle cx="10" cy="16.500" r="1.500" /><path d="M6 13.500a5.500 5.500 0 0 1 8 0M3.500 10a9 9 0 0 1 13 0" /><path d="M.5 7a13 13 0 0 1 19 0" stroke="#7d8184" /></Tray20></TrayButton>
      <TrayButton aria-label="Volume"><Tray20><path d="M2 8h2v6h-2zM5 8l6 -5v16l-6 -5z" fill="#fcfcfc" stroke="none" /><path d="M13 7.500a5 5 0 0 1 0 7" /><path d="M14 4.500a8 8 0 0 1 0 13" stroke="#7d8184" /></Tray20></TrayButton>
      <TrayButton aria-label="Show hidden icons"><Tray20><path d="M13 4v12l-6 -6z" fill="#fcfcfc" stroke="none" /></Tray20></TrayButton>
      <Clock>21:52<small>16.04.2022</small></Clock>
      <TrayButton aria-label="Show desktop">
        <svg width="16" height="16" viewBox="0 0 16 16" fill="none" stroke="#fcfcfc" aria-hidden="true"><path d="M.5 .5h15v15h-15zM2 13.500h12" /></svg>
      </TrayButton>
    </Tray>
  </SidePanel>
);

export default function App() {
  return (
    <>
      <GlobalStyle />
      <Desktop>
        <Workspace>
          <FreeCadWindow />
          <Preferences />
        </Workspace>
        <SideBar />
      </Desktop>
    </>
  );
}
